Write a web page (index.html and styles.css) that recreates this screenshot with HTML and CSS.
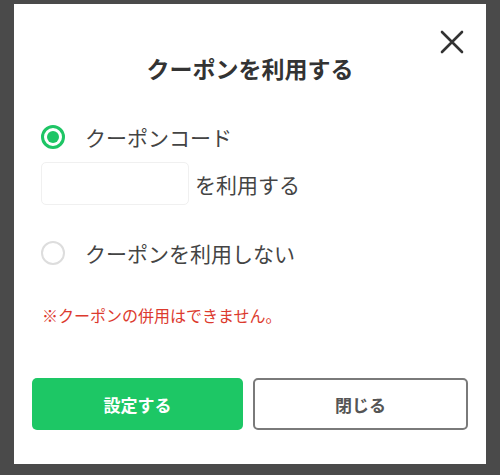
FILE: index.html
```html
<!DOCTYPE html>
<html lang="ja">
<head>
<meta charset="utf-8">
<link rel="stylesheet" href="styles.css">
</head>
<body>
<div class="modal">
  <button class="close" aria-label="閉じる">
    <svg width="24" height="24" viewBox="0 0 24 24"><path d="M2 2L22 22M22 2L2 22" stroke="#333" stroke-width="2.6" stroke-linecap="round" fill="none"/></svg>
  </button>
  <h1 class="title">クーポンを利用する</h1>
  <div class="options">
    <label class="option">
      <span class="radio checked"><span class="dot"></span></span>
      <span class="label">クーポンコード</span>
    </label>
    <div class="code-row">
      <input class="code" type="text">
      <span class="label">を利用する</span>
    </div>
    <label class="option second">
      <span class="radio"></span>
      <span class="label">クーポンを利用しない</span>
    </label>
  </div>
  <p class="notice">※クーポンの併用はできません。</p>
  <div class="actions">
    <button class="btn primary">設定する</button>
    <button class="btn secondary">閉じる</button>
  </div>
</div>
</body>
</html>
```
FILE: styles.css
```css
html, body {
  margin: 0;
  padding: 0;
}
body {
  background: #4a4a4a;
  width: 500px;
  height: 475px;
  font-family: "Noto Sans CJK JP", "Noto Sans", sans-serif;
  color: #333;
}
.modal {
  position: relative;
  box-sizing: border-box;
  margin: 4px 0 0 14px;
  width: 472px;
  height: 460px;
  background: #fff;
  padding: 0 18px;
}
.close {
  position: absolute;
  top: 26px;
  right: 22px;
  width: 24px;
  height: 24px;
  padding: 0;
  border: 0;
  background: none;
}
.close svg { display: block; }
.title {
  margin: 0;
  padding-top: 44px;
  height: 40px;
  line-height: 40px;
  text-align: center;
  font-size: 23px;
  font-weight: bold;
  color: #333;
}
.options {
  margin-top: 29px;
  padding-left: 9px;
}
.option {
  display: flex;
  align-items: center;
  height: 40px;
}
.radio {
  box-sizing: border-box;
  width: 24px;
  height: 24px;
  border-radius: 50%;
  border: 2px solid #ddd;
  display: flex;
  align-items: center;
  justify-content: center;
  margin-right: 20px;
}
.radio.checked {
  border: 3px solid #1ec565;
}
.dot {
  width: 12px;
  height: 12px;
  border-radius: 50%;
  background: #1ec565;
}
.label {
  font-size: 21px;
  line-height: 30px;
  color: #444;
}
.code-row {
  display: flex;
  align-items: center;
  margin-top: 5px;
}
.code {
  box-sizing: border-box;
  width: 148px;
  height: 43px;
  border: 1px solid #f0f0f0;
  border-radius: 5px;
  margin: 0 6px 0 0;
  padding: 0;
  outline: none;
}
.option.second {
  margin-top: 28px;
}
.notice {
  margin: 30px 0 0 10px;
  font-size: 16px;
  line-height: 24px;
  color: #dc3a2e;
}
.actions {
  display: flex;
  gap: 10px;
  margin-top: 51px;
}
.btn {
  flex: 1;
  height: 52px;
  box-sizing: border-box;
  font-family: "Noto Sans CJK JP", "Noto Sans", sans-serif;
  font-size: 17px;
  font-weight: bold;
  border-radius: 5px;
  padding: 0;
}
.primary {
  background: #1dc765;
  border: 0;
  color: #fff;
}
.secondary {
  background: #fff;
  border: 2px solid #7a7a7a;
  color: #555;
}
```
